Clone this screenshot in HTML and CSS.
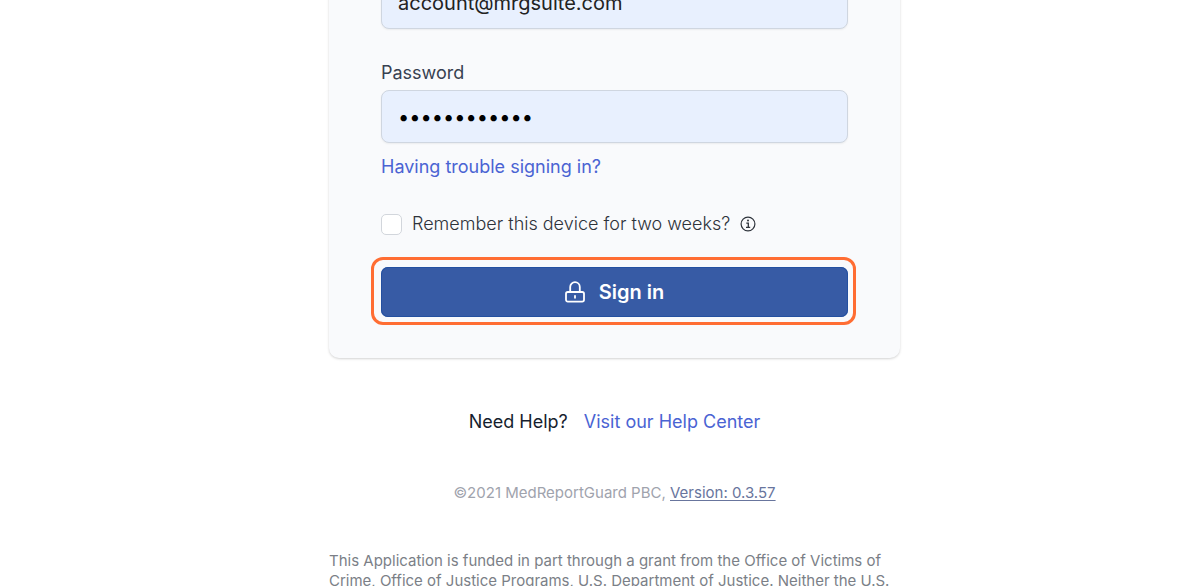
FILE: index.html
```html
<!DOCTYPE html>
<html lang="en">
<head>
<meta charset="utf-8">
<meta name="viewport" content="width=device-width, initial-scale=1">
<title>Sign in</title>
<link rel="stylesheet" href="styles.css">
</head>
<body>
<main class="page">
  <form class="card">
    <input class="field" type="email" aria-label="Email" value="account@mrgsuite.com">
    <label class="label" for="password">Password</label>
    <input class="field field-password" id="password" type="password" value="abcdefghijkl">
    <a class="link trouble" href="#">Having trouble signing in?</a>
    <div class="remember">
      <input class="check" id="remember" type="checkbox">
      <label for="remember">Remember this device for two weeks?</label>
      <svg class="info" viewBox="0 0 16 16" fill="none" stroke="currentColor" aria-hidden="true">
        <circle cx="8" cy="8" r="6.9" stroke-width="1.2"/>
        <path d="M6.3 7.2h2v4M6 11.4h4.2" stroke-width="1.3"/>
        <circle cx="8" cy="4.6" r="1" fill="currentColor" stroke="none"/>
      </svg>
    </div>
    <button class="submit" type="button">
      <svg class="lock" viewBox="0 0 20 24" fill="none" stroke="currentColor" stroke-width="1.8" stroke-linecap="round" aria-hidden="true">
        <rect x="1" y="12" width="18" height="9.6" rx="1.8"/>
        <path d="M5.2 12V7a4.8 4.8 0 0 1 9.6 0V12"/>
        <path d="M10 15.8v2"/>
      </svg>
      <span>Sign in</span>
    </button>
  </form>
  <p class="help">Need Help? <a class="link" href="#">Visit our Help Center</a></p>
  <p class="copyright">©2021 MedReportGuard PBC, <a class="version" href="#">Version: 0.3.57</a></p>
  <p class="funding">This Application is funded in part through a grant from the Office of Victims of Crime, Office of Justice Programs, U.S. Department of Justice. Neither the U.S.</p>
</main>
</body>
</html>
```
FILE: styles.css
```css
* { box-sizing: border-box; }
body {
  margin: 0;
  padding-left: 29px;
  overflow: hidden;
  background: #fff;
  color: #161e2e;
  font: 18px/24px Inter, "Liberation Sans", sans-serif;
}
.page {
  max-width: 571px;
  margin: -76px auto 0;
}
.card {
  display: flex;
  flex-direction: column;
  padding: 52px 52px 41px;
  border-radius: 10px;
  background: #f9fafc;
  box-shadow: 0 1px 3px rgba(0, 0, 0, 0.12), 0 1px 2px rgba(0, 0, 0, 0.06);
}
.field {
  width: 100%;
  height: 53px;
  padding: 0 16px;
  border: 1px solid #cfd6e0;
  border-radius: 8px;
  background: #e8f0fe;
  box-shadow: 0 1px 2px rgba(0, 0, 0, 0.06);
  color: #222;
  font: 20px/30px Inter, "Liberation Sans", sans-serif;
}
.field-password { color: #000; }
.label {
  margin: 32px 0 5px;
  color: #374151;
}
.link {
  color: #4a63d3;
  text-decoration: none;
}
.trouble {
  align-self: flex-start;
  margin-top: 12px;
}
.remember {
  display: flex;
  align-items: center;
  gap: 10px;
  margin: 33px 0 31px;
  color: #2e333b;
  font-weight: 300;
}
.check {
  appearance: none;
  width: 21px;
  height: 21px;
  margin: 0;
  border: 1px solid #d2d6dc;
  border-radius: 5px;
  background: #fff;
}
.info {
  width: 16px;
  height: 16px;
}
.submit {
  position: relative;
  display: flex;
  align-items: center;
  justify-content: center;
  gap: 14px;
  height: 50px;
  padding: 0 20px;
  border: 0;
  border-radius: 7px;
  background: #375ba5;
  box-shadow: inset 0 0 0 1px #2450a0;
  color: #fff;
  font: 600 20px/30px Inter, "Liberation Sans", sans-serif;
}
/* Highlight ring drawn over the area around the button */
.submit::after {
  content: "";
  position: absolute;
  inset: -10px -8px -8px -10px;
  border: 3px solid #ff6d33;
  border-radius: 12px;
}
.lock {
  width: 20px;
  height: 24px;
}
.help {
  display: flex;
  justify-content: center;
  gap: 16px;
  margin: 52px 0 47px;
}
.copyright {
  margin: 0 0 46px;
  color: #9fa3ad;
  font-size: 15px;
  text-align: center;
}
.version {
  color: #68759d;
  text-underline-offset: 2px;
}
.funding {
  margin: 0;
  color: #7b7f87;
  font-size: 15px;
  line-height: 20px;
}
```
